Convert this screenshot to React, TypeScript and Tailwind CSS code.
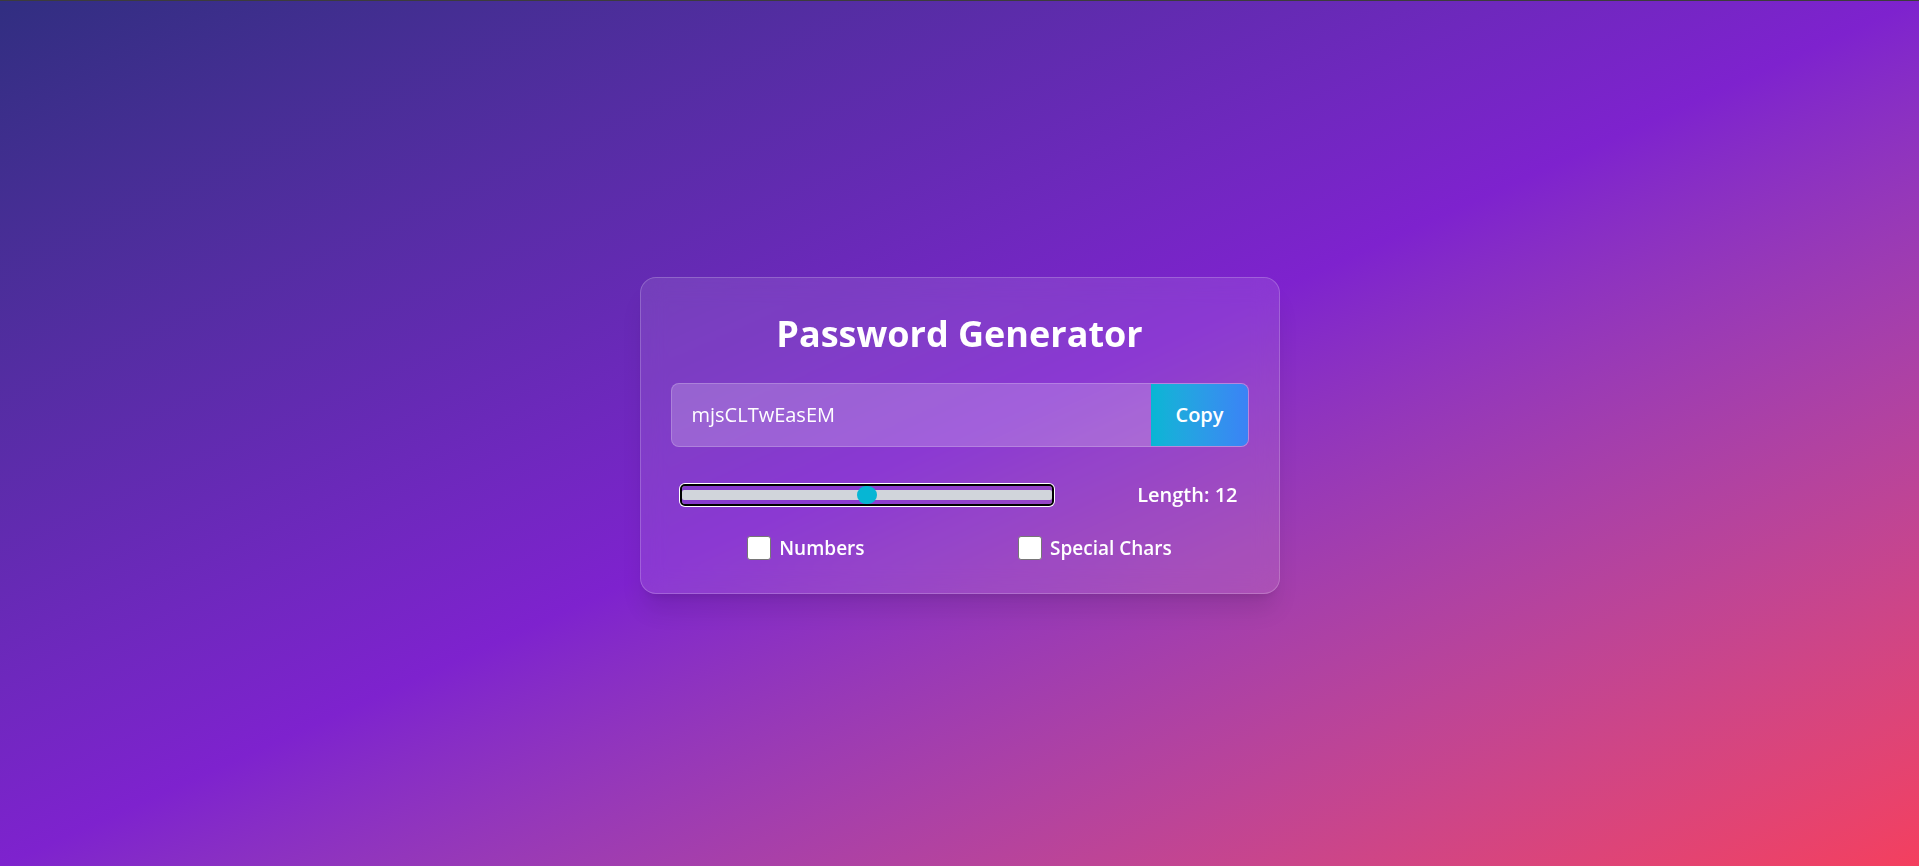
import { useState } from "react";

const LOWER = "abcdefghijklmnopqrstuvwxyz";
const UPPER = "ABCDEFGHIJKLMNOPQRSTUVWXYZ";
const DIGITS = "0123456789";
const SPECIAL = "!@#$%^&*()_+-=[]{}~";

const makePassword = (len: number, numbers: boolean, special: boolean) => {
  let pool = LOWER + UPPER;
  if (numbers) pool += DIGITS;
  if (special) pool += SPECIAL;
  let out = "";
  for (let i = 0; i < len; i++) {
    out += pool[Math.floor(Math.random() * pool.length)];
  }
  return out;
};

const Option: React.FC<{
  label: string;
  checked: boolean;
  onChange: (v: boolean) => void;
}> = ({ label, checked, onChange }) => (
  <label className="flex h-6 items-center gap-2 cursor-pointer">
    <input
      type="checkbox"
      checked={checked}
      onChange={(e) => onChange(e.target.checked)}
      className="h-6 w-6 appearance-none rounded-[3px] border border-[#767676] bg-white checked:bg-[#06b6d4]"
    />
    <span className="text-[19px] leading-6 font-semibold text-white">{label}</span>
  </label>
);

const App: React.FC = () => {
  const [length, setLength] = useState(12);
  const [numbers, setNumbers] = useState(false);
  const [special, setSpecial] = useState(false);
  const [password, setPassword] = useState("mjsCLTwEasEM");

  const update = (len: number, num: boolean, spec: boolean) => {
    setPassword(makePassword(len, num, spec));
  };

  return (
    <div className="flex min-h-screen flex-col bg-gradient-to-br from-[#312e81] via-[#7e22ce] to-[#f43f5e] font-['Open_Sans',sans-serif]">
      <div className="h-px bg-[#3c3c3c]" />
      <div className="flex flex-1 items-center justify-center pt-[4px]">
        <div className="w-[640px] rounded-2xl border border-white/20 bg-white/10 px-[30px] pt-8 pb-[33px] shadow-xl backdrop-blur-md">
          <h1 className="mb-[29px] pt-1 text-center text-4xl font-bold text-white">
            Password Generator
          </h1>

          <div className="mb-8 flex h-16 overflow-hidden rounded-lg border border-white/20 bg-white/20">
            <input
              type="text"
              readOnly
              value={password}
              className="min-w-0 flex-1 bg-transparent px-5 text-xl text-white outline-none"
            />
            <button
              onClick={() => navigator.clipboard?.writeText(password)}
              className="bg-gradient-to-r from-[#06b6d4] to-[#3b82f6] px-6 text-xl font-semibold text-white"
            >
              Copy
            </button>
          </div>

          <div className="flex h-8 items-center justify-between px-[11px]">
            <input
              type="range"
              min={4}
              max={20}
              value={length}
              onChange={(e) => {
                const v = Number(e.target.value);
                setLength(v);
                update(v, numbers, special);
              }}
              className="h-[18px] w-[370px] cursor-pointer appearance-none rounded-[3px] bg-transparent shadow-[0_0_0_3px_#fff] outline-2 outline-black [&::-webkit-slider-runnable-track]:h-[10px] [&::-webkit-slider-runnable-track]:rounded-[2px] [&::-webkit-slider-runnable-track]:bg-[#d1d5db] [&::-webkit-slider-thumb]:mt-[-4px] [&::-webkit-slider-thumb]:h-[18px] [&::-webkit-slider-thumb]:w-[20px] [&::-webkit-slider-thumb]:appearance-none [&::-webkit-slider-thumb]:rounded-full [&::-webkit-slider-thumb]:bg-[#06b6d4]"
            />
            <span className="text-xl font-semibold text-white">
              Length: {length}
            </span>
          </div>

          <div className="mt-[25px] flex justify-around">
            <Option
              label="Numbers"
              checked={numbers}
              onChange={(v) => {
                setNumbers(v);
                update(length, v, special);
              }}
            />
            <Option
              label="Special Chars"
              checked={special}
              onChange={(v) => {
                setSpecial(v);
                update(length, numbers, v);
              }}
            />
          </div>
        </div>
      </div>
    </div>
  );
};

export default App;
